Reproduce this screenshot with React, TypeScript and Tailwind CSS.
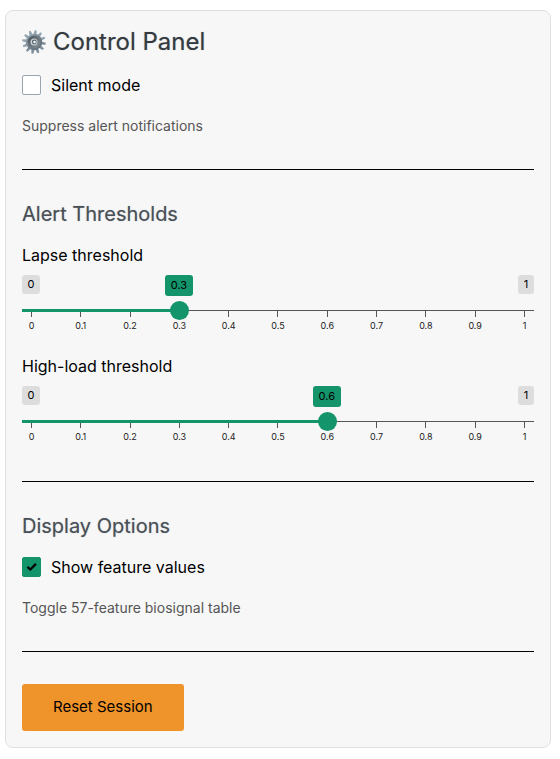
import { useState } from "react";

const TICKS = ["0", "0.1", "0.2", "0.3", "0.4", "0.5", "0.6", "0.7", "0.8", "0.9", "1"];
const TEETH = [0, 30, 60, 90, 120, 150, 180, 210, 240, 270, 300, 330];

function Gear() {
  return (
    <svg viewBox="0 0 48 48" className="size-6 shrink-0" aria-hidden="true">
      <defs>
        <linearGradient id="gear-rim" x1="0" y1="0" x2="1" y2="1">
          <stop offset="0" stopColor="#9fb0bd" />
          <stop offset="0.5" stopColor="#74828e" />
          <stop offset="1" stopColor="#5a6771" />
        </linearGradient>
        <linearGradient id="gear-face" x1="0" y1="0" x2="1" y2="1">
          <stop offset="0" stopColor="#454e55" />
          <stop offset="1" stopColor="#8a949b" />
        </linearGradient>
      </defs>
      {TEETH.map((angle) => (
        <path
          key={angle}
          d="M20.8 10 L22 0.5 H26 L27.2 10 Z"
          fill={angle > 80 && angle < 220 ? "#7d8d99" : "#92a5b3"}
          transform={`rotate(${angle + 8} 24 24)`}
        />
      ))}
      <circle cx="24" cy="24" r="16.5" fill="url(#gear-rim)" />
      <circle cx="24" cy="24" r="12.5" fill="url(#gear-face)" />
      <circle cx="24" cy="24" r="7" fill="#cbd4da" />
      <circle cx="24.5" cy="24" r="4.8" fill="#59646c" />
      <circle cx="25" cy="24" r="2.6" fill="#f6f8f9" />
    </svg>
  );
}

function CheckField({ label, help, initial }: { label: string; help: string; initial: boolean }) {
  const [checked, setChecked] = useState(initial);
  return (
    <div>
      <label className="flex h-6 items-center text-base text-black">
        <span className="relative mr-2.5 h-5 w-[19px] shrink-0">
          <input
            type="checkbox"
            checked={checked}
            onChange={(e) => setChecked(e.target.checked)}
            className="block h-5 w-[19px] appearance-none rounded-[2px] border border-[#9aa5b1] bg-white checked:border-[#13946a] checked:bg-[#13946a]"
          />
          {checked && (
            <svg viewBox="0 0 19 20" className="pointer-events-none absolute inset-0" aria-hidden="true">
              <path d="M5.4 9.8 L8.4 12.5 L13.9 6.9" fill="none" stroke="#000" strokeWidth="2.3" />
            </svg>
          )}
        </span>
        {label}
      </label>
      <p className="mt-5 text-[14px] leading-[18px] text-[#555555]">{help}</p>
    </div>
  );
}

function Threshold({ id, label, initial }: { id: string; label: string; initial: number }) {
  const [value, setValue] = useState(initial);
  const center = `calc(9px + ${value} * (100% - 19px))`;
  return (
    <div className="h-[111px]">
      <label htmlFor={id} className="block text-base leading-6 text-black">
        {label}
      </label>
      <div className="relative mt-2 text-[11px] text-black">
        <div className="flex h-[26px] items-start justify-between">
          <span className="h-[19px] w-[18px] rounded-[3px] bg-[#dddddd] text-center leading-[19px]">0</span>
          <span className="h-[19px] w-4 rounded-[3px] bg-[#dddddd] text-center leading-[19px]">1</span>
        </div>
        <output
          htmlFor={id}
          className="absolute top-0 h-[21px] w-7 -translate-x-1/2 rounded-[3px] bg-[#13946a] text-center leading-[21px]"
          style={{ left: center }}
        >
          {value}
        </output>
        <div className="relative h-[19px]">
          <div className="absolute inset-x-0 top-[9px] h-px bg-[#555555]" />
          <div className="absolute inset-x-0 top-[9px] flex justify-between px-[9px]">
            {TICKS.map((t) => (
              <span key={t} className="h-[7px] w-px bg-[#555555]" />
            ))}
          </div>
          <div className="absolute left-0 top-2 h-[3px] bg-[#13946a]" style={{ width: center }} />
          <input
            id={id}
            type="range"
            min={0}
            max={1}
            step={0.1}
            value={value}
            onChange={(e) => setValue(Number(e.target.value))}
            className="absolute inset-0 block h-[19px] w-full appearance-none bg-transparent [&::-webkit-slider-thumb]:size-[19px] [&::-webkit-slider-thumb]:appearance-none [&::-webkit-slider-thumb]:rounded-full [&::-webkit-slider-thumb]:bg-[#13946a]"
          />
        </div>
        <div className="flex justify-between px-[9px] text-[9px] leading-3 text-[#222222]">
          {TICKS.map((t) => (
            <span key={t} className="flex w-px justify-center whitespace-nowrap">
              {t}
            </span>
          ))}
        </div>
      </div>
    </div>
  );
}

function Divider() {
  return <hr className="mb-8 border-t border-black" />;
}

export default function App() {
  return (
    <main className="mb-[11px] ml-[5px] mr-[9px] mt-2.5 rounded-lg border border-[#e0e0e0] bg-[#f7f7f7] p-4 font-['Inter',sans-serif]">
      <h2 className="mb-4 flex items-center gap-[7px] text-2xl leading-[30px] text-[#343a40] text-shadow-[0_0_1px_#343a4073]">
        <Gear />
        Control Panel
      </h2>
      <CheckField label="Silent mode" help="Suppress alert notifications" initial={false} />
      <div className="h-[34px]" />
      <Divider />

      <h3 className="mb-[17px] text-xl leading-6 text-[#495057] text-shadow-[0_0_1px_#49505773]">Alert Thresholds</h3>
      <Threshold id="lapse" label="Lapse threshold" initial={0.3} />
      <Threshold id="high-load" label="High-load threshold" initial={0.6} />
      <div className="h-4" />
      <Divider />

      <h3 className="mb-[17px] text-xl leading-6 text-[#495057] text-shadow-[0_0_1px_#49505773]">Display Options</h3>
      <CheckField label="Show feature values" help="Toggle 57-feature biosignal table" initial={true} />
      <div className="h-[34px]" />
      <Divider />

      <button type="button" className="block h-[47px] rounded-[3px] bg-[#ef932b] px-[31px] text-[15px] text-black">
        Reset Session
      </button>
    </main>
  );
}
